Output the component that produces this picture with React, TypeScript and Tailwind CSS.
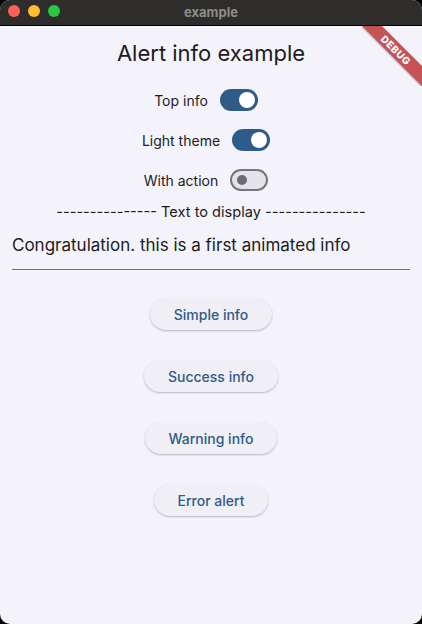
import { useState } from "react";

const font = { fontFamily: "Inter, 'Noto Sans', sans-serif" };

function Toggle({ on, onClick }: { on: boolean; onClick: () => void }) {
  return (
    <div className="w-[48px] flex items-center">
      <button
        onClick={onClick}
        className={`relative h-[22px] w-[38px] rounded-full flex items-center ${
          on
            ? "bg-[#2f5b89]"
            : "bg-[#e4e3eb] border-2 border-[#76757d]"
        }`}
      >
        {on ? (
          <span className="absolute right-[3px] h-[16px] w-[16px] rounded-full bg-white" />
        ) : (
          <span className="absolute left-[5px] h-[10px] w-[10px] rounded-full bg-[#6d6c74]" />
        )}
      </button>
    </div>
  );
}

function ActionButton({ label }: { label: string }) {
  return (
    <button className="h-[32px] px-[24px] rounded-full bg-[#f0eff6] text-[14px] font-medium text-[#2f5a89] shadow-[0_1px_2px_rgba(0,0,0,0.25)]">
      {label}
    </button>
  );
}

export default function App() {
  const [topInfo, setTopInfo] = useState(true);
  const [lightTheme, setLightTheme] = useState(true);
  const [withAction, setWithAction] = useState(false);

  return (
    <div className="w-[422px] h-[624px] bg-black" style={font}>
      <div className="w-full h-full rounded-[10px] overflow-hidden flex flex-col bg-[#f4f3fb]">
        {/* window title bar */}
        <div className="relative h-[26px] bg-[#2e2d2b] border-b border-black flex items-center justify-center shrink-0">
          <div className="absolute left-[8px] top-[5px] flex gap-[8px]">
            <span className="h-[12px] w-[12px] rounded-full bg-[#fe5f57]" />
            <span className="h-[12px] w-[12px] rounded-full bg-[#febc2e]" />
            <span className="h-[12px] w-[12px] rounded-full bg-[#28c840]" />
          </div>
          <span className="text-[13px] font-bold text-[#8d8c8a]">example</span>
        </div>

        <div className="relative flex-1 flex flex-col items-center text-[#1b1b21]">
          {/* debug banner */}
          <div className="absolute top-0 right-0 h-[60px] w-[60px] overflow-hidden pointer-events-none">
            <div className="absolute left-[-16px] top-[17px] h-[14px] w-[100px] rotate-45 bg-[rgba(183,28,28,0.75)] shadow-[0_1px_2px_rgba(0,0,0,0.3)] flex items-center justify-center">
              <span className="text-[10px] font-extrabold tracking-[0.5px] text-white leading-none">
                DEBUG
              </span>
            </div>
          </div>

          <h1 className="mt-[14px] text-[22px] leading-[26px]">Alert info example</h1>

          <div className="mt-[23px] flex flex-col items-center gap-[18px] text-[14px]">
            <div className="flex items-center gap-[12px] h-[22px]">
              <span>Top info</span>
              <Toggle on={topInfo} onClick={() => setTopInfo(!topInfo)} />
            </div>
            <div className="flex items-center gap-[12px] h-[22px]">
              <span>Light theme</span>
              <Toggle on={lightTheme} onClick={() => setLightTheme(!lightTheme)} />
            </div>
            <div className="flex items-center gap-[12px] h-[22px]">
              <span>With action</span>
              <Toggle on={withAction} onClick={() => setWithAction(!withAction)} />
            </div>
          </div>

          <div className="mt-[12px] text-[14.6px] leading-[18px]">
            --------------- Text to display ---------------
          </div>

          <div className="mt-[13px] w-full px-[12px]">
            <div className="border-b border-[#6f6e76] pb-[13px] text-[17px] leading-[22px]">
              Congratulation. this is a first animated info
            </div>
          </div>

          <div className="mt-[28px] flex flex-col items-center gap-[30px]">
            <ActionButton label="Simple info" />
            <ActionButton label="Success info" />
            <ActionButton label="Warning info" />
            <ActionButton label="Error alert" />
          </div>
        </div>
      </div>
    </div>
  );
}
